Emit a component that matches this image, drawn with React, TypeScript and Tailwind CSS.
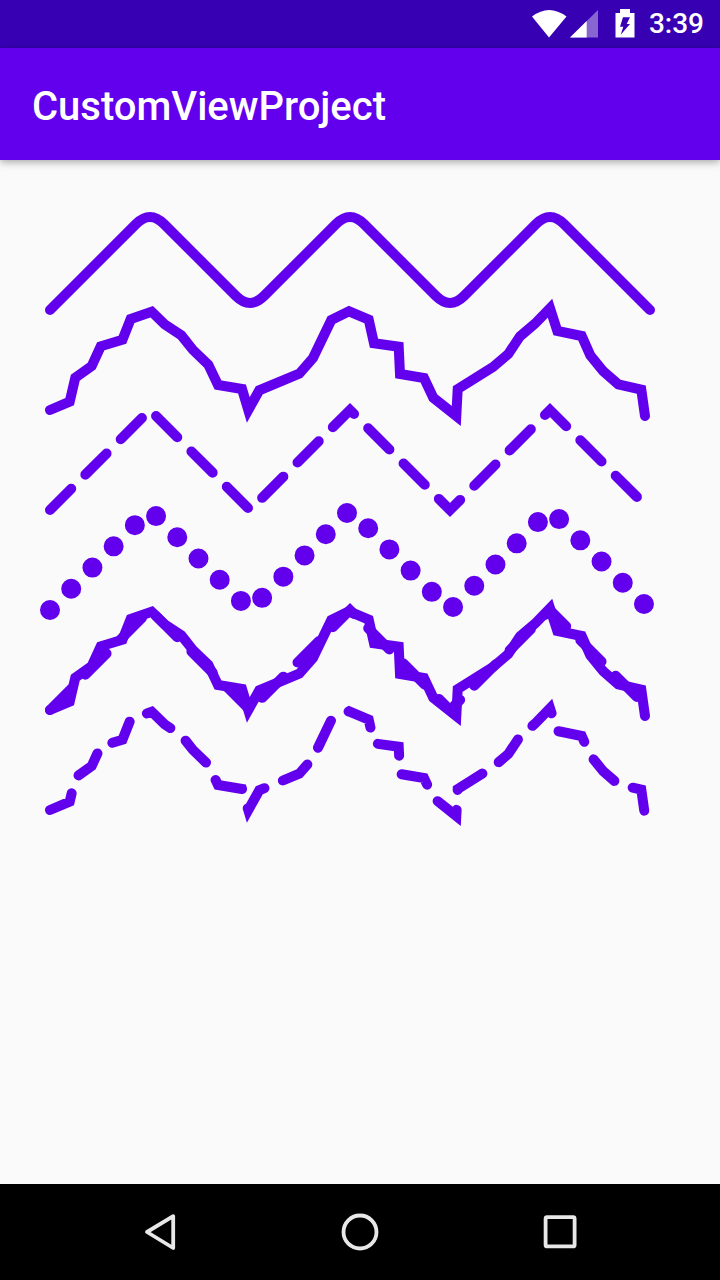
const jag = "M50,410 L69.7,401.7 L75.3,377.7 L91.7,366 L100.7,346.3 L122.5,339.7 L130.7,319 L151.7,311.7 L164.7,324.3 L181.3,335.3 L193,350 L208.3,364.7 L218,385 L242,389 L248.3,410 L259.3,390.3 L299.3,373.7 L313,358 L331.3,320 L349,311.3 L368.7,319.7 L374,343.3 L398.7,346.7 L400,374 L424,378 L433.3,397.7 L456.3,416 L457.7,389 L493,367 L508.3,354 L520,336.3 L535,323.7 L550,308.3 L557.3,331 L581.7,336 L590.3,355.3 L603.3,371.3 L618.3,384.3 L641.3,389.7 L645,416";

function Zig({ y }: { y: number }) {
  return <path d={`M50,${y + 100} L150,${y} L250,${y + 100} L350,${y} L450,${y + 100} L550,${y} L650,${y + 100}`} />;
}

export default function App() {
  return (
    <div className="flex h-[1280px] w-[720px] flex-col overflow-hidden bg-[#fafafa] font-['Roboto',sans-serif]">
      <div className="flex h-12 items-center justify-end bg-[#3700b3] pr-4 text-white">
        <svg width="112" height="48" viewBox="525 0 112 48" className="block">
          <path d="M533,16.5 Q550,3.5 567.5,16.5 L550,37.5 Z" fill="#fff" />
          <path d="M571,37.5 L599,10 V37.5 Z" fill="#fff" fillOpacity="0.4" />
          <path d="M571,37.5 L587.7,21 V37.5 Z" fill="#fff" />
          <path fillRule="evenodd" d="M621,13 V9 H631 V13 H635.5 V37.5 H616.5 V13 Z M624,17.3 H631 L627.7,24 H631 L621.7,34.7 L624.3,26.7 H621 Z" fill="#fff" />
        </svg>
        <span className="ml-[13px] text-[28px] font-medium leading-none">3:39</span>
      </div>
      <header className="z-10 flex h-28 items-center bg-[#6200ee] pl-8 pt-1.5 shadow-[0_2px_8px_rgba(0,0,0,0.35)]">
        <h1 className="text-[40px] font-medium leading-none text-white">CustomViewProject</h1>
      </header>
      <main className="min-h-0 flex-1">
        <svg width="720" height="1024" viewBox="0 160 720 1024" className="block" fill="none" stroke="#6200ee" strokeLinecap="round" strokeWidth="10" strokeMiterlimit="4">
          <path d="M50,310 L135.9,224.1 Q150,210 164.1,224.1 L235.9,295.9 Q250,310 264.1,295.9 L335.9,224.1 Q350,210 364.1,224.1 L435.9,295.9 Q450,310 464.1,295.9 L535.9,224.1 Q550,210 564.1,224.1 L650,310" />
          <path d={jag} />
          <g strokeDasharray="30 20"><Zig y={410} /></g>
          <g strokeDasharray="0 30" strokeWidth="20"><Zig y={510} /></g>
          <g transform="translate(0,300)"><path d={jag} /></g>
          <g strokeDasharray="30 20"><Zig y={610} /></g>
          <g transform="translate(0,400)"><path d={jag} strokeDasharray="30 20" /></g>
        </svg>
      </main>
      <nav className="flex h-24 items-center justify-center bg-black">
        <svg width="480" height="96" viewBox="120 1184 480 96" fill="none" stroke="#e8e8e8" strokeWidth="3.8" strokeLinejoin="round" className="block">
          <path d="M147,1232 L173.2,1216.2 V1248 Z" />
          <circle cx="360" cy="1232" r="16.5" />
          <rect x="545.6" y="1217.2" width="29" height="29.2" rx="1.5" />
        </svg>
      </nav>
    </div>
  );
}
